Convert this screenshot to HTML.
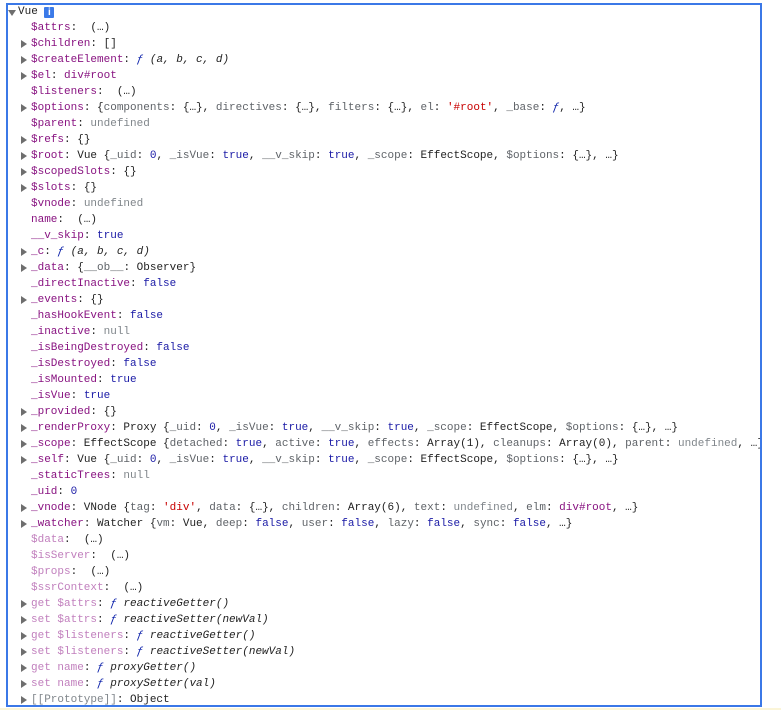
<!DOCTYPE html>
<html><head><meta charset="utf-8">
<style>
html,body{margin:0;padding:0;background:#fff;width:781px;height:710px;overflow:hidden}
#box{position:absolute;left:6px;top:3px;width:752px;height:700px;border:2px solid #3b78e7;overflow:hidden}
#bot{position:absolute;left:0;top:708px;width:781px;height:2px;background:#fbf5d8}
.l{position:absolute;left:0;height:16px;line-height:16px;white-space:pre;font-family:"Liberation Mono",monospace;font-size:11px;color:#222}
.t{position:absolute;top:4px;width:0;height:0;border-top:4px solid transparent;border-bottom:4px solid transparent;border-left:6px solid #6e6e6e}
.td{position:absolute;top:6px;width:0;height:0;border-left:4px solid transparent;border-right:4px solid transparent;border-top:6px solid #6e6e6e}
.k{color:#881280}
.kd{color:#c17fbd}
.n{color:#80868b}
.b{color:#1a1aa6}
.s{color:#c80000}
.p{color:#5f6368}
.i{font-style:italic}
.f{font-style:italic;color:#0d22aa}
.info{display:inline-block;width:10px;height:11px;background:#3b7ae8;color:#fff;font-size:10px;line-height:11px;text-align:center;border-radius:1px;vertical-align:-1px;font-family:"Liberation Sans",sans-serif;font-weight:bold}
.r{position:absolute;left:23px}.tr{left:13px}
</style></head><body>
<div id="box">
<div style="position:absolute;left:0;top:-1px;width:900px">
<div class="l" style="top:0"><span class="td" style="left:0"></span><span style="position:absolute;left:10px">Vue <span class="info">i</span></span></div>
</div>
</div>
<div id="bot"></div>
<div style="position:absolute;left:8px;top:4px;width:752px;height:701px;overflow:hidden">
<div class="l" style="top:16px"><span class="r"><span class="k">$attrs</span>:  (…)</span></div>
<div class="l" style="top:32px"><span class="t tr"></span><span class="r"><span class="k">$children</span>: []</span></div>
<div class="l" style="top:48px"><span class="t tr"></span><span class="r"><span class="k">$createElement</span>: <span class="f">ƒ</span> <span class="i">(a, b, c, d)</span></span></div>
<div class="l" style="top:64px"><span class="t tr"></span><span class="r"><span class="k">$el</span>: <span class="k">div#root</span></span></div>
<div class="l" style="top:80px"><span class="r"><span class="k">$listeners</span>:  (…)</span></div>
<div class="l" style="top:96px"><span class="t tr"></span><span class="r"><span class="k">$options</span>: {<span class="p">components</span>: {…}, <span class="p">directives</span>: {…}, <span class="p">filters</span>: {…}, <span class="p">el</span>: <span class="s">'#root'</span>, <span class="p">_base</span>: <span class="f">ƒ</span>, …}</span></div>
<div class="l" style="top:112px"><span class="r"><span class="k">$parent</span>: <span class="n">undefined</span></span></div>
<div class="l" style="top:128px"><span class="t tr"></span><span class="r"><span class="k">$refs</span>: {}</span></div>
<div class="l" style="top:144px"><span class="t tr"></span><span class="r"><span class="k">$root</span>: Vue {<span class="p">_uid</span>: <span class="b">0</span>, <span class="p">_isVue</span>: <span class="b">true</span>, <span class="p">__v_skip</span>: <span class="b">true</span>, <span class="p">_scope</span>: EffectScope, <span class="p">$options</span>: {…}, …}</span></div>
<div class="l" style="top:160px"><span class="t tr"></span><span class="r"><span class="k">$scopedSlots</span>: {}</span></div>
<div class="l" style="top:176px"><span class="t tr"></span><span class="r"><span class="k">$slots</span>: {}</span></div>
<div class="l" style="top:192px"><span class="r"><span class="k">$vnode</span>: <span class="n">undefined</span></span></div>
<div class="l" style="top:208px"><span class="r"><span class="k">name</span>:  (…)</span></div>
<div class="l" style="top:224px"><span class="r"><span class="k">__v_skip</span>: <span class="b">true</span></span></div>
<div class="l" style="top:240px"><span class="t tr"></span><span class="r"><span class="k">_c</span>: <span class="f">ƒ</span> <span class="i">(a, b, c, d)</span></span></div>
<div class="l" style="top:256px"><span class="t tr"></span><span class="r"><span class="k">_data</span>: {<span class="p">__ob__</span>: Observer}</span></div>
<div class="l" style="top:272px"><span class="r"><span class="k">_directInactive</span>: <span class="b">false</span></span></div>
<div class="l" style="top:288px"><span class="t tr"></span><span class="r"><span class="k">_events</span>: {}</span></div>
<div class="l" style="top:304px"><span class="r"><span class="k">_hasHookEvent</span>: <span class="b">false</span></span></div>
<div class="l" style="top:320px"><span class="r"><span class="k">_inactive</span>: <span class="n">null</span></span></div>
<div class="l" style="top:336px"><span class="r"><span class="k">_isBeingDestroyed</span>: <span class="b">false</span></span></div>
<div class="l" style="top:352px"><span class="r"><span class="k">_isDestroyed</span>: <span class="b">false</span></span></div>
<div class="l" style="top:368px"><span class="r"><span class="k">_isMounted</span>: <span class="b">true</span></span></div>
<div class="l" style="top:384px"><span class="r"><span class="k">_isVue</span>: <span class="b">true</span></span></div>
<div class="l" style="top:400px"><span class="t tr"></span><span class="r"><span class="k">_provided</span>: {}</span></div>
<div class="l" style="top:416px"><span class="t tr"></span><span class="r"><span class="k">_renderProxy</span>: Proxy {<span class="p">_uid</span>: <span class="b">0</span>, <span class="p">_isVue</span>: <span class="b">true</span>, <span class="p">__v_skip</span>: <span class="b">true</span>, <span class="p">_scope</span>: EffectScope, <span class="p">$options</span>: {…}, …}</span></div>
<div class="l" style="top:432px"><span class="t tr"></span><span class="r"><span class="k">_scope</span>: EffectScope {<span class="p">detached</span>: <span class="b">true</span>, <span class="p">active</span>: <span class="b">true</span>, <span class="p">effects</span>: Array(1), <span class="p">cleanups</span>: Array(0), <span class="p">parent</span>: <span class="n">undefined</span>, …}</span></div>
<div class="l" style="top:448px"><span class="t tr"></span><span class="r"><span class="k">_self</span>: Vue {<span class="p">_uid</span>: <span class="b">0</span>, <span class="p">_isVue</span>: <span class="b">true</span>, <span class="p">__v_skip</span>: <span class="b">true</span>, <span class="p">_scope</span>: EffectScope, <span class="p">$options</span>: {…}, …}</span></div>
<div class="l" style="top:464px"><span class="r"><span class="k">_staticTrees</span>: <span class="n">null</span></span></div>
<div class="l" style="top:480px"><span class="r"><span class="k">_uid</span>: <span class="b">0</span></span></div>
<div class="l" style="top:496px"><span class="t tr"></span><span class="r"><span class="k">_vnode</span>: VNode {<span class="p">tag</span>: <span class="s">'div'</span>, <span class="p">data</span>: {…}, <span class="p">children</span>: Array(6), <span class="p">text</span>: <span class="n">undefined</span>, <span class="p">elm</span>: <span class="k">div#root</span>, …}</span></div>
<div class="l" style="top:512px"><span class="t tr"></span><span class="r"><span class="k">_watcher</span>: Watcher {<span class="p">vm</span>: Vue, <span class="p">deep</span>: <span class="b">false</span>, <span class="p">user</span>: <span class="b">false</span>, <span class="p">lazy</span>: <span class="b">false</span>, <span class="p">sync</span>: <span class="b">false</span>, …}</span></div>
<div class="l" style="top:528px"><span class="r"><span class="kd">$data</span>:  (…)</span></div>
<div class="l" style="top:544px"><span class="r"><span class="kd">$isServer</span>:  (…)</span></div>
<div class="l" style="top:560px"><span class="r"><span class="kd">$props</span>:  (…)</span></div>
<div class="l" style="top:576px"><span class="r"><span class="kd">$ssrContext</span>:  (…)</span></div>
<div class="l" style="top:592px"><span class="t tr"></span><span class="r"><span class="kd">get $attrs</span>: <span class="f">ƒ</span> <span class="i">reactiveGetter()</span></span></div>
<div class="l" style="top:608px"><span class="t tr"></span><span class="r"><span class="kd">set $attrs</span>: <span class="f">ƒ</span> <span class="i">reactiveSetter(newVal)</span></span></div>
<div class="l" style="top:624px"><span class="t tr"></span><span class="r"><span class="kd">get $listeners</span>: <span class="f">ƒ</span> <span class="i">reactiveGetter()</span></span></div>
<div class="l" style="top:640px"><span class="t tr"></span><span class="r"><span class="kd">set $listeners</span>: <span class="f">ƒ</span> <span class="i">reactiveSetter(newVal)</span></span></div>
<div class="l" style="top:656px"><span class="t tr"></span><span class="r"><span class="kd">get name</span>: <span class="f">ƒ</span> <span class="i">proxyGetter()</span></span></div>
<div class="l" style="top:672px"><span class="t tr"></span><span class="r"><span class="kd">set name</span>: <span class="f">ƒ</span> <span class="i">proxySetter(val)</span></span></div>
<div class="l" style="top:688px"><span class="t tr"></span><span class="r"><span class="n">[[Prototype]]</span>: Object</span></div>
</div>
</body></html>
